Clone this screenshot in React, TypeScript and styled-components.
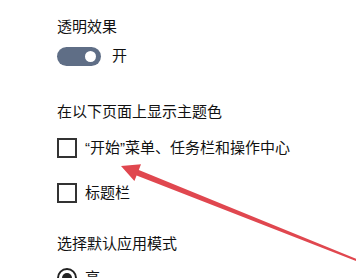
import React from 'react';
import styled, { createGlobalStyle } from 'styled-components';

const GlobalStyle = createGlobalStyle`
  html, body {
    margin: 0;
    padding: 0;
    background: #ffffff;
  }
  body {
    font-family: "Liberation Sans", "Noto Sans CJK SC", sans-serif;
    color: #111111;
    overflow: hidden;
  }
`;

const Page = styled.div`
  position: relative;
  width: 356px;
  height: 278px;
  padding: 17px 0 0 57px;
  box-sizing: border-box;
  overflow: hidden;
`;

const Heading = styled.div<{ $top: number }>`
  margin-top: ${(p) => p.$top}px;
  font-size: 15px;
  line-height: 20px;
  white-space: nowrap;
`;

const Row = styled.div<{ $top: number }>`
  display: flex;
  align-items: center;
  gap: 8px;
  height: 20px;
  margin-top: ${(p) => p.$top}px;
  font-size: 15px;
  line-height: 20px;
  white-space: nowrap;
`;

const Toggle = styled.div<{ $on: boolean }>`
  position: relative;
  width: 44px;
  height: 19px;
  border-radius: 10px;
  background: ${(p) => (p.$on ? '#5f6e86' : '#ffffff')};
  margin-right: 3px;

  &::after {
    content: '';
    position: absolute;
    top: 4px;
    left: ${(p) => (p.$on ? '28px' : '5px')};
    width: 11px;
    height: 11px;
    border-radius: 50%;
    background: #ffffff;
  }
`;

const Checkbox = styled.div`
  width: 20px;
  height: 20px;
  box-sizing: border-box;
  border: 2px solid #333333;
`;

const Radio = styled.div`
  position: relative;
  width: 20px;
  height: 20px;
  box-sizing: border-box;
  border: 2px solid #222222;
  border-radius: 50%;

  &::after {
    content: '';
    position: absolute;
    top: 3px;
    left: 3px;
    width: 10px;
    height: 10px;
    border-radius: 50%;
    background: #222222;
  }
`;

const ArrowLayer = styled.svg`
  position: absolute;
  left: 0;
  top: 0;
  pointer-events: none;
`;

function Arrow() {
  // tail sits outside the right edge, tip points to the first checkbox label
  return (
    <ArrowLayer width="356" height="278" viewBox="0 0 356 278">
      <polygon
        points="121,166 141,164.3 138.8,169.9 357,259.2 356.3,261 136.6,175.5 134.4,181"
        fill="#e0474f"
      />
    </ArrowLayer>
  );
}

export default function App() {
  return (
    <>
      <GlobalStyle />
      <Page>
        <Heading $top={0}>透明效果</Heading>
        <Row $top={9}>
          <Toggle $on />
          <span>开</span>
        </Row>
        <Heading $top={36}>在以下页面上显示主题色</Heading>
        <Row $top={16}>
          <Checkbox />
          <span>“开始”菜单、任务栏和操作中心</span>
        </Row>
        <Row $top={25}>
          <Checkbox />
          <span>标题栏</span>
        </Row>
        <Heading $top={31}>选择默认应用模式</Heading>
        <Row $top={14}>
          <Radio />
          <span>亮</span>
        </Row>
        <Arrow />
      </Page>
    </>
  );
}
